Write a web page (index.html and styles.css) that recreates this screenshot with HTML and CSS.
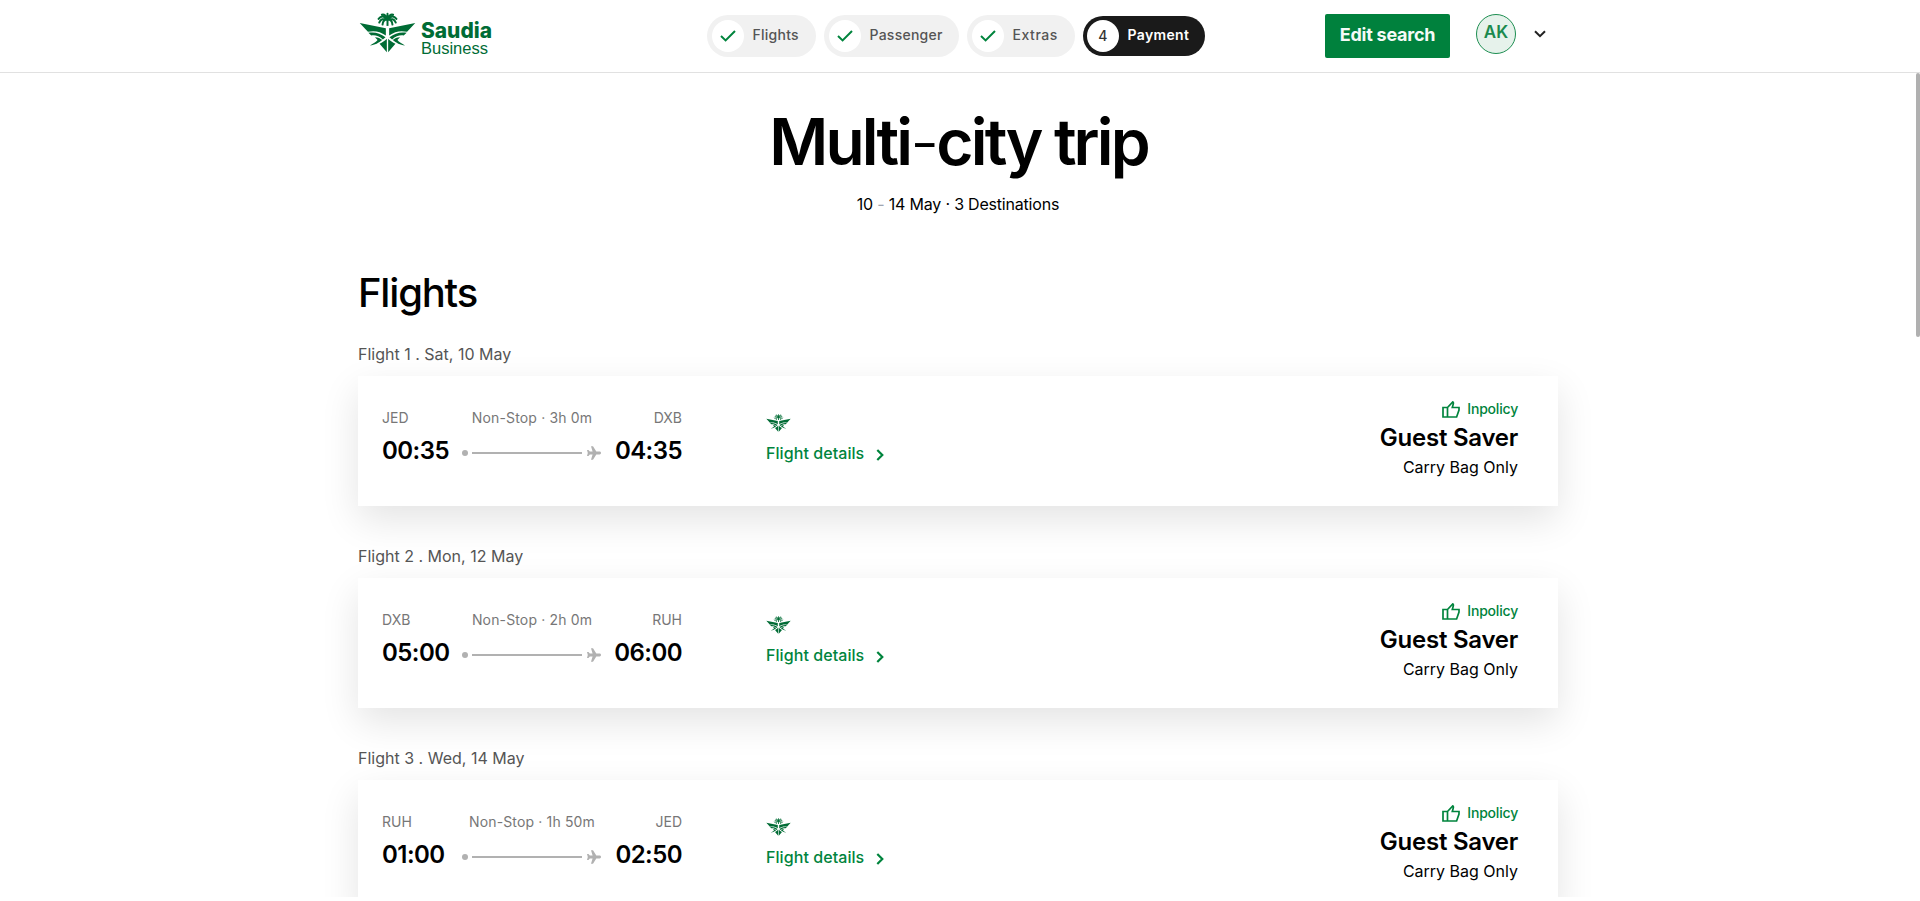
FILE: index.html
```html
<!DOCTYPE html>
<html lang="en">
<head>
<meta charset="utf-8">
<title>Multi-city trip</title>
<link rel="stylesheet" href="styles.css">
</head>
<body>
<svg class="defs" aria-hidden="true">
  <symbol id="emblem" viewBox="28 36 172 124">
    <path d="M30 69 L109 85 V107 C92 95 74 91 55 96 L49 90Z"/>
    <path d="M56 99 C75 95 92 101 108 112 L100 119 C89 109 77 105 65 107Z"/>
    <path d="M76 112 C86 112 92 116 98 121 C88 129 76 137 61 137 C71 132 79 127 84 121Z"/>
    <path d="M112 117 V158 L90 132 C98 128 106 123 112 117Z"/>
    <path d="M198 69 L119 85 V107 C136 95 154 91 173 96 L179 90Z"/>
    <path d="M172 99 C153 95 136 101 120 112 L128 119 C139 109 151 105 163 107Z"/>
    <path d="M152 112 C142 112 136 116 130 121 C140 129 152 137 167 137 C157 132 149 127 144 121Z"/>
    <path d="M116 117 V158 L138 132 C130 128 122 123 116 117Z"/>
    <path d="M111 78 V60 H117 V78Z"/>
    <g fill="none" stroke="currentColor" stroke-width="6" stroke-linecap="round">
      <path d="M114 58 C104 47 94 47 87 57M114 59 C100 54 92 60 89 68M114 59 C104 58 100 66 99 74M114 58 C108 44 102 42 97 44M114 58V41M114 58 C120 44 126 42 131 44M114 58 C124 47 134 47 141 57M114 59 C128 54 136 60 139 68M114 59 C124 58 128 66 129 74"/>
    </g>
  </symbol>
  <symbol id="check" viewBox="0 0 16 12"><path d="M1 6l4.600 4.400L15 1" fill="none" stroke="currentColor" stroke-width="2"/></symbol>
  <symbol id="plane" viewBox="0 0 14 14"><path d="M14 7c0-.8-.6-1.400-1.400-1.400H9.300L6 .2H4L5.600 5.600H2.800L1.500 4H0L.8 7 0 10h1.500l1.300-1.600h2.800L4 13.800h2L9.300 8.400h3.300C13.400 8.400 14 7.800 14 7z"/></symbol>
  <symbol id="thumb" viewBox="0 0 18 17"><path d="M1 6.500H5.500V16H1zM5.500 6.500L10.800.9C11.600 1.500 11.500 2.300 11.200 3.200L10.300 6.500H17V9L14.600 16H5.500" fill="none" stroke="currentColor" stroke-width="1.700"/></symbol>
  <symbol id="next" viewBox="0 0 8 12"><path d="M1.300 1l5 5-5 5" fill="none" stroke="currentColor" stroke-width="2.200"/></symbol>
</svg>

<header class="header">
  <div class="header-inner">
    <a class="logo">
      <svg class="logo-emblem"><use href="#emblem"/></svg>
      <svg class="logo-text" viewBox="0 0 74 40">
        <text class="logo-name" x="0" y="25.500" textLength="71" lengthAdjust="spacingAndGlyphs">Saudia</text>
        <text class="logo-sub" x="0" y="41.500" textLength="67" lengthAdjust="spacingAndGlyphs">Business</text>
      </svg>
    </a>
    <nav class="steps">
      <div class="step step-flights"><span class="bullet"><svg><use href="#check"/></svg></span><span class="step-label">Flights</span></div>
      <div class="step step-passenger"><span class="bullet"><svg><use href="#check"/></svg></span><span class="step-label">Passenger</span></div>
      <div class="step step-extras"><span class="bullet"><svg><use href="#check"/></svg></span><span class="step-label">Extras</span></div>
      <div class="step step-current"><span class="bullet">4</span><span class="step-label">Payment</span></div>
    </nav>
    <button class="edit">Edit search</button>
    <div class="avatar">AK</div>
    <svg class="caret" viewBox="0 0 12 8"><path d="M1 1.200l5 5 5-5" fill="none" stroke="#222" stroke-width="2"/></svg>
  </div>
</header>

<main class="page">
  <h1 class="title">Multi<span class="thin">-</span>city trip</h1>
  <p class="subtitle">10 <span class="dash">-</span> 14 May · 3 Destinations</p>
  <h2 class="section">Flights</h2>

  <section class="flight">
    <p class="flight-label">Flight 1 . Sat, 10 May</p>
    <div class="card">
      <div class="leg">
        <div class="leg-row codes"><span>JED</span><span class="stops">Non-Stop · 3h 0m</span><span>DXB</span></div>
        <div class="leg-row times"><span>00:35</span><span class="track"><i class="dot"></i><i class="line"></i><svg><use href="#plane"/></svg></span><span>04:35</span></div>
      </div>
      <div class="details"><svg class="airline"><use href="#emblem"/></svg><a class="link">Flight details<svg><use href="#next"/></svg></a></div>
      <div class="fare">
        <div class="policy"><svg><use href="#thumb"/></svg>Inpolicy</div>
        <div class="fare-name">Guest Saver</div>
        <div class="bag">Carry Bag Only</div>
      </div>
    </div>
  </section>

  <section class="flight">
    <p class="flight-label">Flight 2 . Mon, 12 May</p>
    <div class="card">
      <div class="leg">
        <div class="leg-row codes"><span>DXB</span><span class="stops">Non-Stop · 2h 0m</span><span>RUH</span></div>
        <div class="leg-row times"><span>05:00</span><span class="track"><i class="dot"></i><i class="line"></i><svg><use href="#plane"/></svg></span><span>06:00</span></div>
      </div>
      <div class="details"><svg class="airline"><use href="#emblem"/></svg><a class="link">Flight details<svg><use href="#next"/></svg></a></div>
      <div class="fare">
        <div class="policy"><svg><use href="#thumb"/></svg>Inpolicy</div>
        <div class="fare-name">Guest Saver</div>
        <div class="bag">Carry Bag Only</div>
      </div>
    </div>
  </section>

  <section class="flight">
    <p class="flight-label">Flight 3 . Wed, 14 May</p>
    <div class="card">
      <div class="leg">
        <div class="leg-row codes"><span>RUH</span><span class="stops">Non-Stop · 1h 50m</span><span>JED</span></div>
        <div class="leg-row times"><span>01:00</span><span class="track"><i class="dot"></i><i class="line"></i><svg><use href="#plane"/></svg></span><span>02:50</span></div>
      </div>
      <div class="details"><svg class="airline"><use href="#emblem"/></svg><a class="link">Flight details<svg><use href="#next"/></svg></a></div>
      <div class="fare">
        <div class="policy"><svg><use href="#thumb"/></svg>Inpolicy</div>
        <div class="fare-name">Guest Saver</div>
        <div class="bag">Carry Bag Only</div>
      </div>
    </div>
  </section>
</main>
<div class="scrollbar"></div>
</body>
</html>
```
FILE: styles.css
```css
* { box-sizing: border-box; margin: 0; padding: 0; }
html, body { height: 100%; overflow: hidden; background: #fff; }
body { font-family: Inter, "Open Sans", sans-serif; font-size: 16px; color: #000; }
svg { display: block; flex: none; fill: currentColor; }
.defs { position: absolute; width: 0; height: 0; }

.header { height: 73px; border-bottom: 1px solid #e1e1e1; }
.header-inner { display: flex; width: 1204px; height: 72px; margin-left: 358px; align-items: center; }
.logo { display: flex; width: 136px; height: 72px; padding: 12px 0 0 1px; color: #006c35; }
.logo-emblem { width: 57px; height: 41px; }
.logo-text { width: 74px; height: 40px; margin-left: 5px; overflow: visible; }
.logo-name { font: 800 21.500px Inter, sans-serif; }
.logo-sub { font: 400 16px "Liberation Sans", sans-serif; }

.steps { display: flex; gap: 8px; align-items: center; margin-left: 213px; }
.step { display: flex; align-items: center; height: 42px; padding-left: 5px; border-radius: 21px; background: #f1f1f1; color: #555; font-size: 14px; font-weight: 500; letter-spacing: .25px; }
.step-flights { width: 109px; }
.step-passenger { width: 135px; }
.step-extras { width: 108px; }
.step-extras .step-label { letter-spacing: .55px; }
.step-current { width: 122px; height: 40px; padding-left: 4px; background: #1a1a1a; color: #fff; font-weight: 600; letter-spacing: .35px; }
.bullet { display: flex; width: 32px; height: 32px; border-radius: 50%; background: #fff; align-items: center; justify-content: center; color: #00843d; }
.bullet svg { width: 16px; height: 12px; }
.step-current .bullet { color: #333; padding-bottom: 2px; font-weight: 500; }
.step-label { padding: 0 0 3px 8.500px; }
.edit { width: 125px; height: 44px; margin-left: 120px; padding-bottom: 3px; border: 0; border-radius: 2px; background: #00813d; color: #f5faf7; font: 700 18px Inter, sans-serif; letter-spacing: -.25px; }
.avatar { width: 40px; height: 40px; margin: 0 18px 4px 26px; padding-bottom: 4px; border: 1px solid #1d8e51; border-radius: 50%; background: #e6f2eb; color: #1b8a4e; font-size: 17px; font-weight: 600; line-height: 34px; text-align: center; }
.caret { width: 12px; height: 8px; margin-bottom: 5px; }

.page { height: 824px; padding: 37px 362px 0 358px; overflow: hidden; }
.title { font-size: 64px; font-weight: 600; line-height: 64px; letter-spacing: -2.850px; text-align: center; padding-left: 1px; }
.thin { font-weight: 300; }
.subtitle { margin-top: 18px; line-height: 24px; letter-spacing: -.2px; text-align: center; }
.dash { color: #a0a5b0; }
.section { margin: 53px 0 25px; font-size: 40px; font-weight: 500; line-height: 48px; letter-spacing: -1.200px; }
.flight { margin-bottom: 38px; }
.flight-label { line-height: 24px; color: #555; }
.card { display: flex; height: 130px; margin-top: 10px; padding: 0 40px 0 24px; background: #fff; box-shadow: 0 14px 36px rgba(0, 0, 0, .11); }
.leg { width: 300px; padding-top: 32px; }
.leg-row { display: grid; grid-template-columns: 80px 1fr 80px; }
.leg-row > :last-child { text-align: right; }
.codes { line-height: 20px; font-size: 14px; color: #777; }
.stops { text-align: center; letter-spacing: .15px; }
.times { margin-top: 8px; line-height: 30px; font-size: 24px; font-weight: 600; letter-spacing: -.550px; }
.track { display: flex; align-items: center; padding-top: 4px; height: 30px; color: #b1b1b1; }
.dot { width: 6px; height: 6px; border-radius: 50%; background: #b1b1b1; }
.line { width: 110px; height: 2px; margin: 0 5px 0 4px; flex: none; background: #b1b1b1; }
.track svg { width: 14px; height: 14px; }
.details { margin-left: 84px; padding-top: 38px; color: #00843d; }
.airline { width: 25px; height: 18px; color: #006c35; }
.link { display: flex; gap: 12px; align-items: center; margin-top: 9px; line-height: 24px; font-weight: 500; letter-spacing: .07px; }
.link svg { width: 8px; height: 12px; margin-top: 3px; }
.fare { display: flex; flex-direction: column; align-items: flex-end; margin-left: auto; padding-top: 23px; }
.policy { display: flex; gap: 7px; align-items: center; line-height: 20px; font-size: 14px; font-weight: 500; letter-spacing: -.2px; color: #00843d; }
.policy svg { width: 18px; height: 17px; }
.fare-name { margin-top: 3px; line-height: 31px; font-size: 24px; font-weight: 600; letter-spacing: -.250px; }
.bag { margin-top: 1px; line-height: 26px; }

.scrollbar { position: absolute; top: 73px; right: 0; width: 4px; height: 264px; border-radius: 2px; background: #b0b0b0; }
```
